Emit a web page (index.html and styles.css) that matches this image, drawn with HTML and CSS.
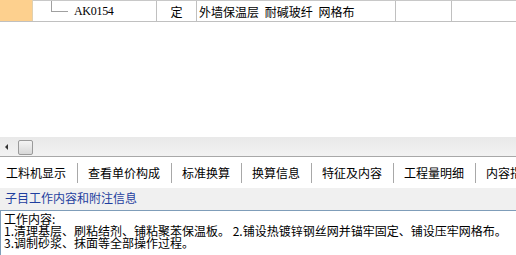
FILE: index.html
```html
<!DOCTYPE html>
<html lang="zh-CN">
<head>
<meta charset="utf-8">
<link rel="stylesheet" href="styles.css">
</head>
<body>
<div class="page">
  <div class="grid">
    <div class="row">
      <div class="cell c-mark"></div>
      <div class="cell c-code"><span class="tree"></span><span class="code">AK0154</span></div>
      <div class="cell c-type">定</div>
      <div class="cell c-name">外墙保温层 耐碱玻纤 网格布</div>
      <div class="cell c-e1"></div>
      <div class="cell c-e2"></div>
    </div>
  </div>
  <div class="hscroll">
    <span class="arrow"></span>
    <span class="thumb"></span>
  </div>
  <div class="tabs">
    <span class="tab first">工料机显示</span>
    <span class="tab">查看单价构成</span>
    <span class="tab">标准换算</span>
    <span class="tab">换算信息</span>
    <span class="tab">特征及内容</span>
    <span class="tab">工程量明细</span>
    <span class="tab last">内容指引</span>
  </div>
  <div class="section-title">子目工作内容和附注信息</div>
  <div class="memo">
    <div class="line">工作内容:</div>
    <div class="line">1.清理基层、刷粘结剂、铺粘聚苯保温板。 2.铺设热镀锌钢丝网并锚牢固定、铺设压牢网格布。</div>
    <div class="line">3.调制砂浆、抹面等全部操作过程。</div>
  </div>
</div>
</body>
</html>
```

FILE: styles.css
```css
* { box-sizing: border-box; }
html, body {
  margin: 0;
  padding: 0;
  background: #ffffff;
}
body {
  font-family: "Noto Sans CJK SC", "Liberation Sans", sans-serif;
  font-size: 12px;
  color: #000;
}
.page {
  width: 516px;
  height: 255px;
  overflow: hidden;
  display: flex;
  flex-direction: column;
}
.grid {
  height: 137px;
  background: #fff;
  flex: none;
}
.row {
  display: flex;
  height: 22px;
  border-top: 1px solid #c8c8c8;
  border-bottom: 1px solid #c0c0c0;
}
.cell {
  height: 20px;
  border-right: 1px solid #c0c0c0;
  display: flex;
  align-items: center;
  white-space: nowrap;
  overflow: hidden;
}
.c-mark {
  width: 33px;
  background: #fdd08e;
  border-right-color: #e0d0b0;
  margin-top: -1px;
  height: 21px;
}
.c-code {
  width: 124px;
  position: relative;
  padding-left: 41px;
}
.tree {
  position: absolute;
  left: 18px;
  top: -1px;
  width: 17px;
  height: 12px;
  border-left: 1px solid #a0a0a0;
  border-bottom: 1px solid #a0a0a0;
}
.code {
  font-family: "Liberation Serif", serif;
  font-size: 12px;
  letter-spacing: -0.3px;
}
.c-type {
  width: 40px;
  justify-content: center;
  font-size: 12px;
}
.c-name {
  width: 199px;
  padding-left: 2px;
  font-size: 12px;
  word-spacing: 3px;
}
.c-e1 { width: 56px; }
.c-e2 { width: 64px; border-right: none; }

.hscroll {
  height: 20px;
  flex: none;
  background: linear-gradient(#e9e9e9, #f2f2f2);
  border-bottom: 1px solid #a8a8a8;
  display: flex;
  align-items: center;
  padding-left: 5px;
}
.arrow {
  width: 0;
  height: 0;
  border-top: 3px solid transparent;
  border-bottom: 3px solid transparent;
  border-right: 3px solid #333;
  margin-right: 10px;
}
.thumb {
  width: 15px;
  height: 15px;
  border: 1px solid #9a9a9a;
  border-radius: 2px;
  background: linear-gradient(#f4f4f4, #d8d8d8);
  margin-top: 2px;
}

.tabs {
  height: 31px;
  flex: none;
  background: #fff;
  display: flex;
  align-items: center;
  white-space: nowrap;
  font-size: 12px;
}
.tab {
  padding: 0 11px 0 10px;
  border-right: 1px solid #a8a8a8;
  line-height: 20px;
  height: 20px;
}
.tab.first { padding-left: 6px; }
.tab.last { border-right: none; }

.section-title {
  height: 22px;
  flex: none;
  background: #f0f0f0;
  color: #1f3f9f;
  padding-left: 5px;
  line-height: 20px;
}
.memo {
  flex: 1;
  background: #fff;
  border-top: 1px solid #7f9db9;
  border-left: 1px solid #7f9db9;
  padding: 2px 0 0 3px;
}
.line {
  line-height: 12px;
  height: 12px;
  white-space: nowrap;
  font-size: 12px;
}
.line + .line { margin-top: 0; }
```
